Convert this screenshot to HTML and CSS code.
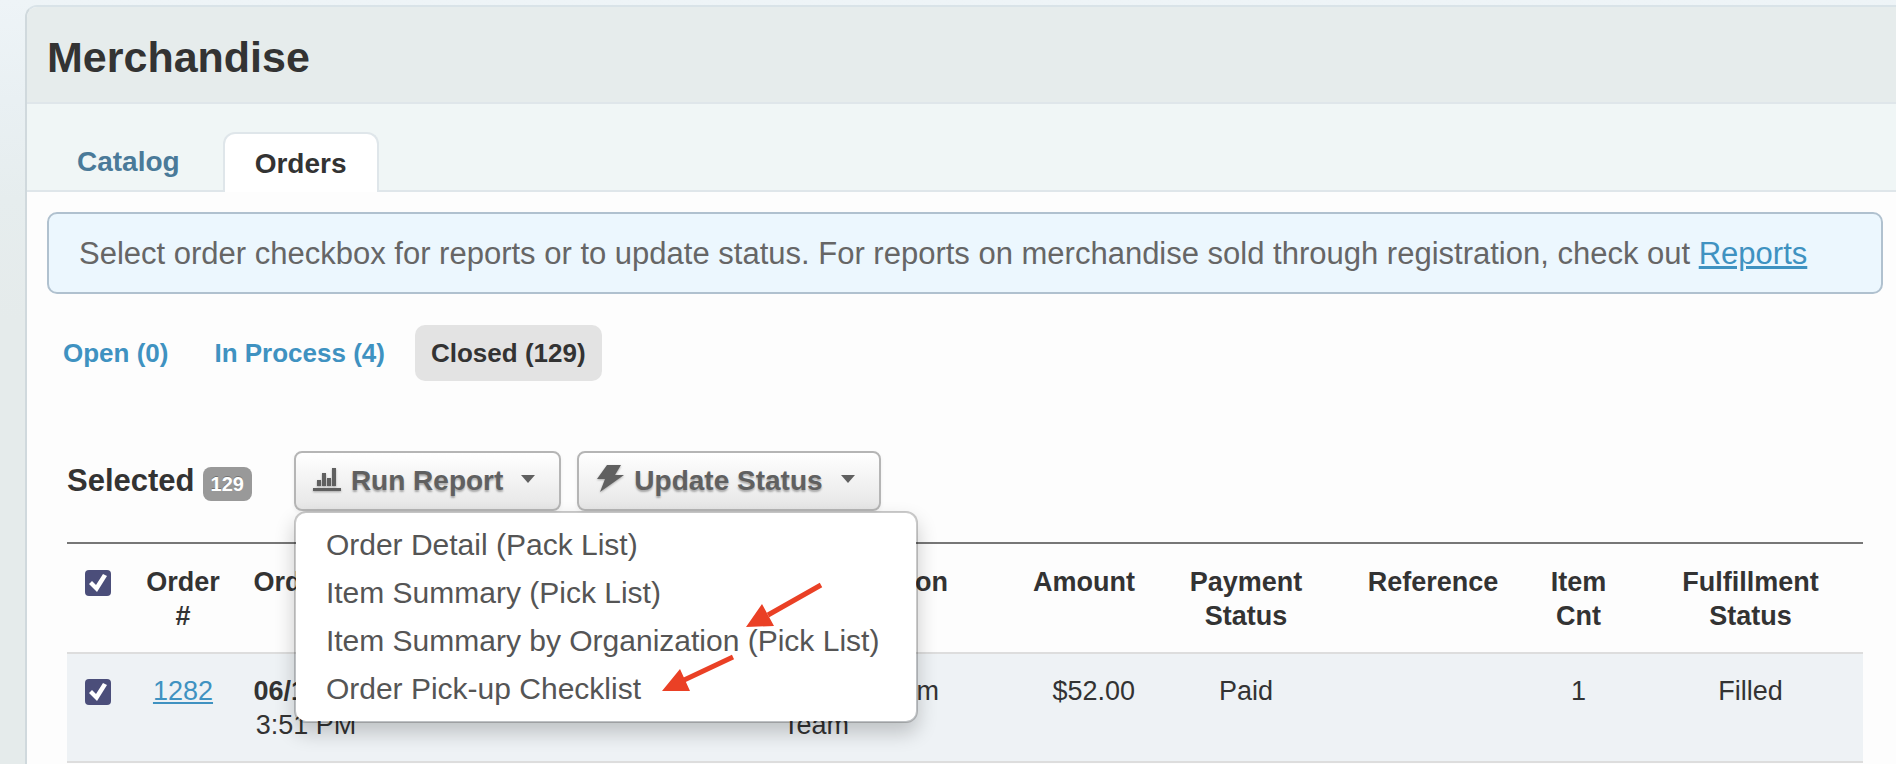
FILE: index.html
```html
<!DOCTYPE html>
<html lang="en">
<head>
<meta charset="utf-8">
<title>Merchandise</title>
<link rel="stylesheet" href="styles.css">
</head>
<body>
<main class="panel">
  <header class="panel-header"><h1>Merchandise</h1></header>
  <nav class="tabs" aria-label="Sections">
    <a class="tab" href="#catalog">Catalog</a>
    <a class="tab tab-active" href="#orders" aria-current="page">Orders</a>
  </nav>
  <section class="content">
    <p class="notice">Select order checkbox for reports or to update status. For reports on merchandise sold through registration, check out <a href="#reports">Reports</a></p>
    <nav class="pills" aria-label="Order status">
      <a class="pill" href="#open">Open (0)</a>
      <a class="pill" href="#in-process">In Process (4)</a>
      <a class="pill pill-active" href="#closed">Closed (129)</a>
    </nav>
    <div class="orders">
      <div class="toolbar">
        <div class="selected">Selected <span class="badge">129</span></div>
        <div class="dropdown">
          <button class="btn" type="button" aria-haspopup="true" aria-expanded="true">
            <svg class="icon" width="28" height="28" viewBox="0 0 28 28" aria-hidden="true"><path d="M0 24h28v3H0zM4 16h4v6H4zM9 9h4v13H9zM14 14h4v8h-4zM19 4h4v18h-4z"/></svg>
            <span>Run Report</span>
            <span class="caret"></span>
          </button>
          <ul class="menu">
            <li><a href="#detail">Order Detail (Pack List)</a></li>
            <li><a href="#summary">Item Summary (Pick List)</a></li>
            <li><a href="#organization">Item Summary by Organization (Pick List)</a></li>
            <li><a href="#checklist">Order Pick-up Checklist</a></li>
          </ul>
          <svg class="arrows" width="624" height="212" viewBox="0 0 624 212" aria-hidden="true">
            <path d="M527 74L474 104M439 146L388 170" stroke="#ea4025" stroke-width="5"/>
            <path d="M452 116L468 93L480 115zM368 180L386 158L396 180z" fill="#ea4025"/>
          </svg>
        </div>
        <button class="btn" type="button" aria-haspopup="true">
          <svg class="icon" width="28" height="28" viewBox="0 0 28 28" aria-hidden="true"><path d="M11 1H25L19 11H28L4 28L9 15H1z"/></svg>
          <span>Update Status</span>
          <span class="caret"></span>
        </button>
      </div>
      <table class="table">
        <colgroup>
          <col class="c-check"><col class="c-order"><col class="c-date"><col><col class="c-org">
          <col class="c-amount"><col class="c-payment"><col class="c-ref"><col class="c-count"><col class="c-status">
        </colgroup>
        <thead>
          <tr>
            <th><input class="check" type="checkbox" checked aria-label="Select all orders"></th>
            <th>Order #</th>
            <th>Ordered</th>
            <th></th>
            <th class="left">Organization</th>
            <th class="right">Amount</th>
            <th>Payment Status</th>
            <th>Reference</th>
            <th>Item Cnt</th>
            <th>Fulfillment Status</th>
          </tr>
        </thead>
        <tbody>
          <tr>
            <td><input class="check" type="checkbox" checked aria-label="Select order 1282"></td>
            <td><a href="#1282">1282</a></td>
            <td><strong>06/14/24</strong><br>3:51 PM</td>
            <td></td>
            <td class="left">Florida Swim<br>Team</td>
            <td class="right">$52.00</td>
            <td>Paid</td>
            <td></td>
            <td>1</td>
            <td>Filled</td>
          </tr>
        </tbody>
      </table>
    </div>
  </section>
</main>
</body>
</html>
```
FILE: styles.css
```css
* { box-sizing: border-box; }

body {
  margin: 0;
  padding: 5px 0 0 25px;
  min-height: 100vh;
  overflow: hidden;
  background: linear-gradient(#eef4f7 0, #e9f0f3 100px, #e6edee 200px, #e5ebeb 320px, #e5ebeb 100%);
  color: #333;
  font-family: "Helvetica Neue", "Liberation Sans", Arial, sans-serif;
  font-size: 27px;
  line-height: 34px;
}

a { color: #3f92c1; }

.panel {
  min-height: calc(100vh - 5px);
  border: 2px solid #d0d9dd;
  border-width: 2px 0 0 2px;
  border-top-color: #d9e3e8;
  border-radius: 12px 0 0 0;
  background: #fdfdfd;
  overflow: hidden;
}

.panel-header {
  padding: 26px 20px 21px;
  background: #e6ecec;
  border-bottom: 2px solid #dfe6ea;
}

h1 {
  margin: 0;
  font-size: 43px;
  line-height: 48px;
}

.tabs {
  display: flex;
  align-items: flex-end;
  gap: 11px;
  height: 88px;
  padding-left: 18px;
  background: #f0f6f6;
  border-bottom: 2px solid #dfe6ea;
}

.tab {
  padding: 15px 30px 13px;
  border: 2px solid transparent;
  border-bottom: 0;
  border-radius: 12px 12px 0 0;
  color: #4a7a99;
  font-size: 28px;
  font-weight: bold;
  line-height: 30px;
  text-decoration: none;
}

.tab-active {
  margin-bottom: -2px;
  background: #fff;
  border-color: #dfe6ea;
  color: #333;
}

.content { padding: 20px 13px 0 20px; }

.notice {
  margin: 0;
  padding: 21px 30px 19px;
  border: 2px solid #b0c1cf;
  border-radius: 10px;
  background: #ecf7fe;
  color: #666;
  font-size: 31px;
  line-height: 38px;
}

.pills {
  display: flex;
  gap: 14px;
  margin-top: 31px;
}

.pill {
  padding: 11px 16px;
  border-radius: 10px;
  font-size: 26px;
  font-weight: bold;
  text-decoration: none;
}

.pill-active {
  background: #e3e3e3;
  color: #333;
}

.orders { padding: 70px 20px 0; }

.toolbar {
  display: flex;
  align-items: center;
  gap: 16px;
  margin-bottom: 31px;
}

.selected {
  display: flex;
  align-items: center;
  gap: 8px;
  margin-right: 26px;
  font-size: 31px;
  font-weight: bold;
}

.badge {
  margin-top: 6px;
  padding: 0 8px;
  border-radius: 8px;
  background: #999;
  color: #fff;
  font-size: 20px;
  text-shadow: 0 -1px 0 rgba(0, 0, 0, .25);
}

.dropdown { position: relative; }

.btn {
  display: flex;
  align-items: center;
  height: 60px;
  padding: 0 24px 0 17px;
  border: 2px solid #b5b5b5;
  border-radius: 8px;
  background: linear-gradient(#fff, #e6e6e6);
  box-shadow: 0 2px 4px rgba(0, 0, 0, .06);
  color: #606060;
  font: bold 28px/34px "Helvetica Neue", "Liberation Sans", Arial, sans-serif;
  text-shadow: 0 2px 2px rgba(0, 0, 0, .3);
}

.icon {
  margin-right: 10px;
  margin-bottom: 6px;
  fill: #606060;
  filter: drop-shadow(0 1px 1px rgba(0, 0, 0, .3));
}

.caret {
  margin: 0 0 4px 18px;
  border: 7px solid transparent;
  border-top: 8px solid #606060;
  border-bottom: 0;
}

.menu {
  position: absolute;
  top: 100%;
  left: 0;
  z-index: 1;
  min-width: 624px;
  margin: 0;
  padding: 8px 0;
  border: 2px solid rgba(0, 0, 0, .2);
  border-radius: 12px;
  background: #fff;
  background-clip: padding-box;
  box-shadow: 0 10px 20px rgba(0, 0, 0, .2);
  list-style: none;
  white-space: nowrap;
}

.menu a {
  display: block;
  padding: 4px 30px;
  color: #555;
  font-size: 30px;
  line-height: 40px;
  text-decoration: none;
}

.arrows {
  position: absolute;
  top: 100%;
  left: 0;
  z-index: 2;
  pointer-events: none;
}

.table {
  width: 100%;
  table-layout: fixed;
  border-spacing: 0;
  border-bottom: 2px solid #ddd;
}

.c-check { width: 62px; }
.c-order { width: 108px; }
.c-date { width: 138px; }
.c-org { width: 196px; }
.c-amount { width: 176px; }
.c-payment { width: 202px; }
.c-ref { width: 172px; }
.c-count { width: 119px; }
.c-status { width: 225px; }

th, td {
  padding: 20px 10px;
  border-top: 2px solid #ddd;
  text-align: center;
  vertical-align: top;
}

th {
  padding: 21px 10px 19px;
  border-top-color: #777;
}

td {
  padding-bottom: 19px;
  background: #eef2f5;
}

.left { text-align: left; white-space: nowrap; }
.right { text-align: right; }

.check {
  appearance: none;
  display: block;
  width: 26px;
  height: 26px;
  margin: 5px auto 0;
  border-radius: 4px;
  background: #4b4e7a;
}

.check:checked::before {
  content: "";
  display: block;
  width: 26px;
  height: 26px;
  background: #fff;
  clip-path: polygon(4px 14px, 7px 11px, 11px 15px, 18px 4px, 22px 6px, 12px 22px);
}
```
